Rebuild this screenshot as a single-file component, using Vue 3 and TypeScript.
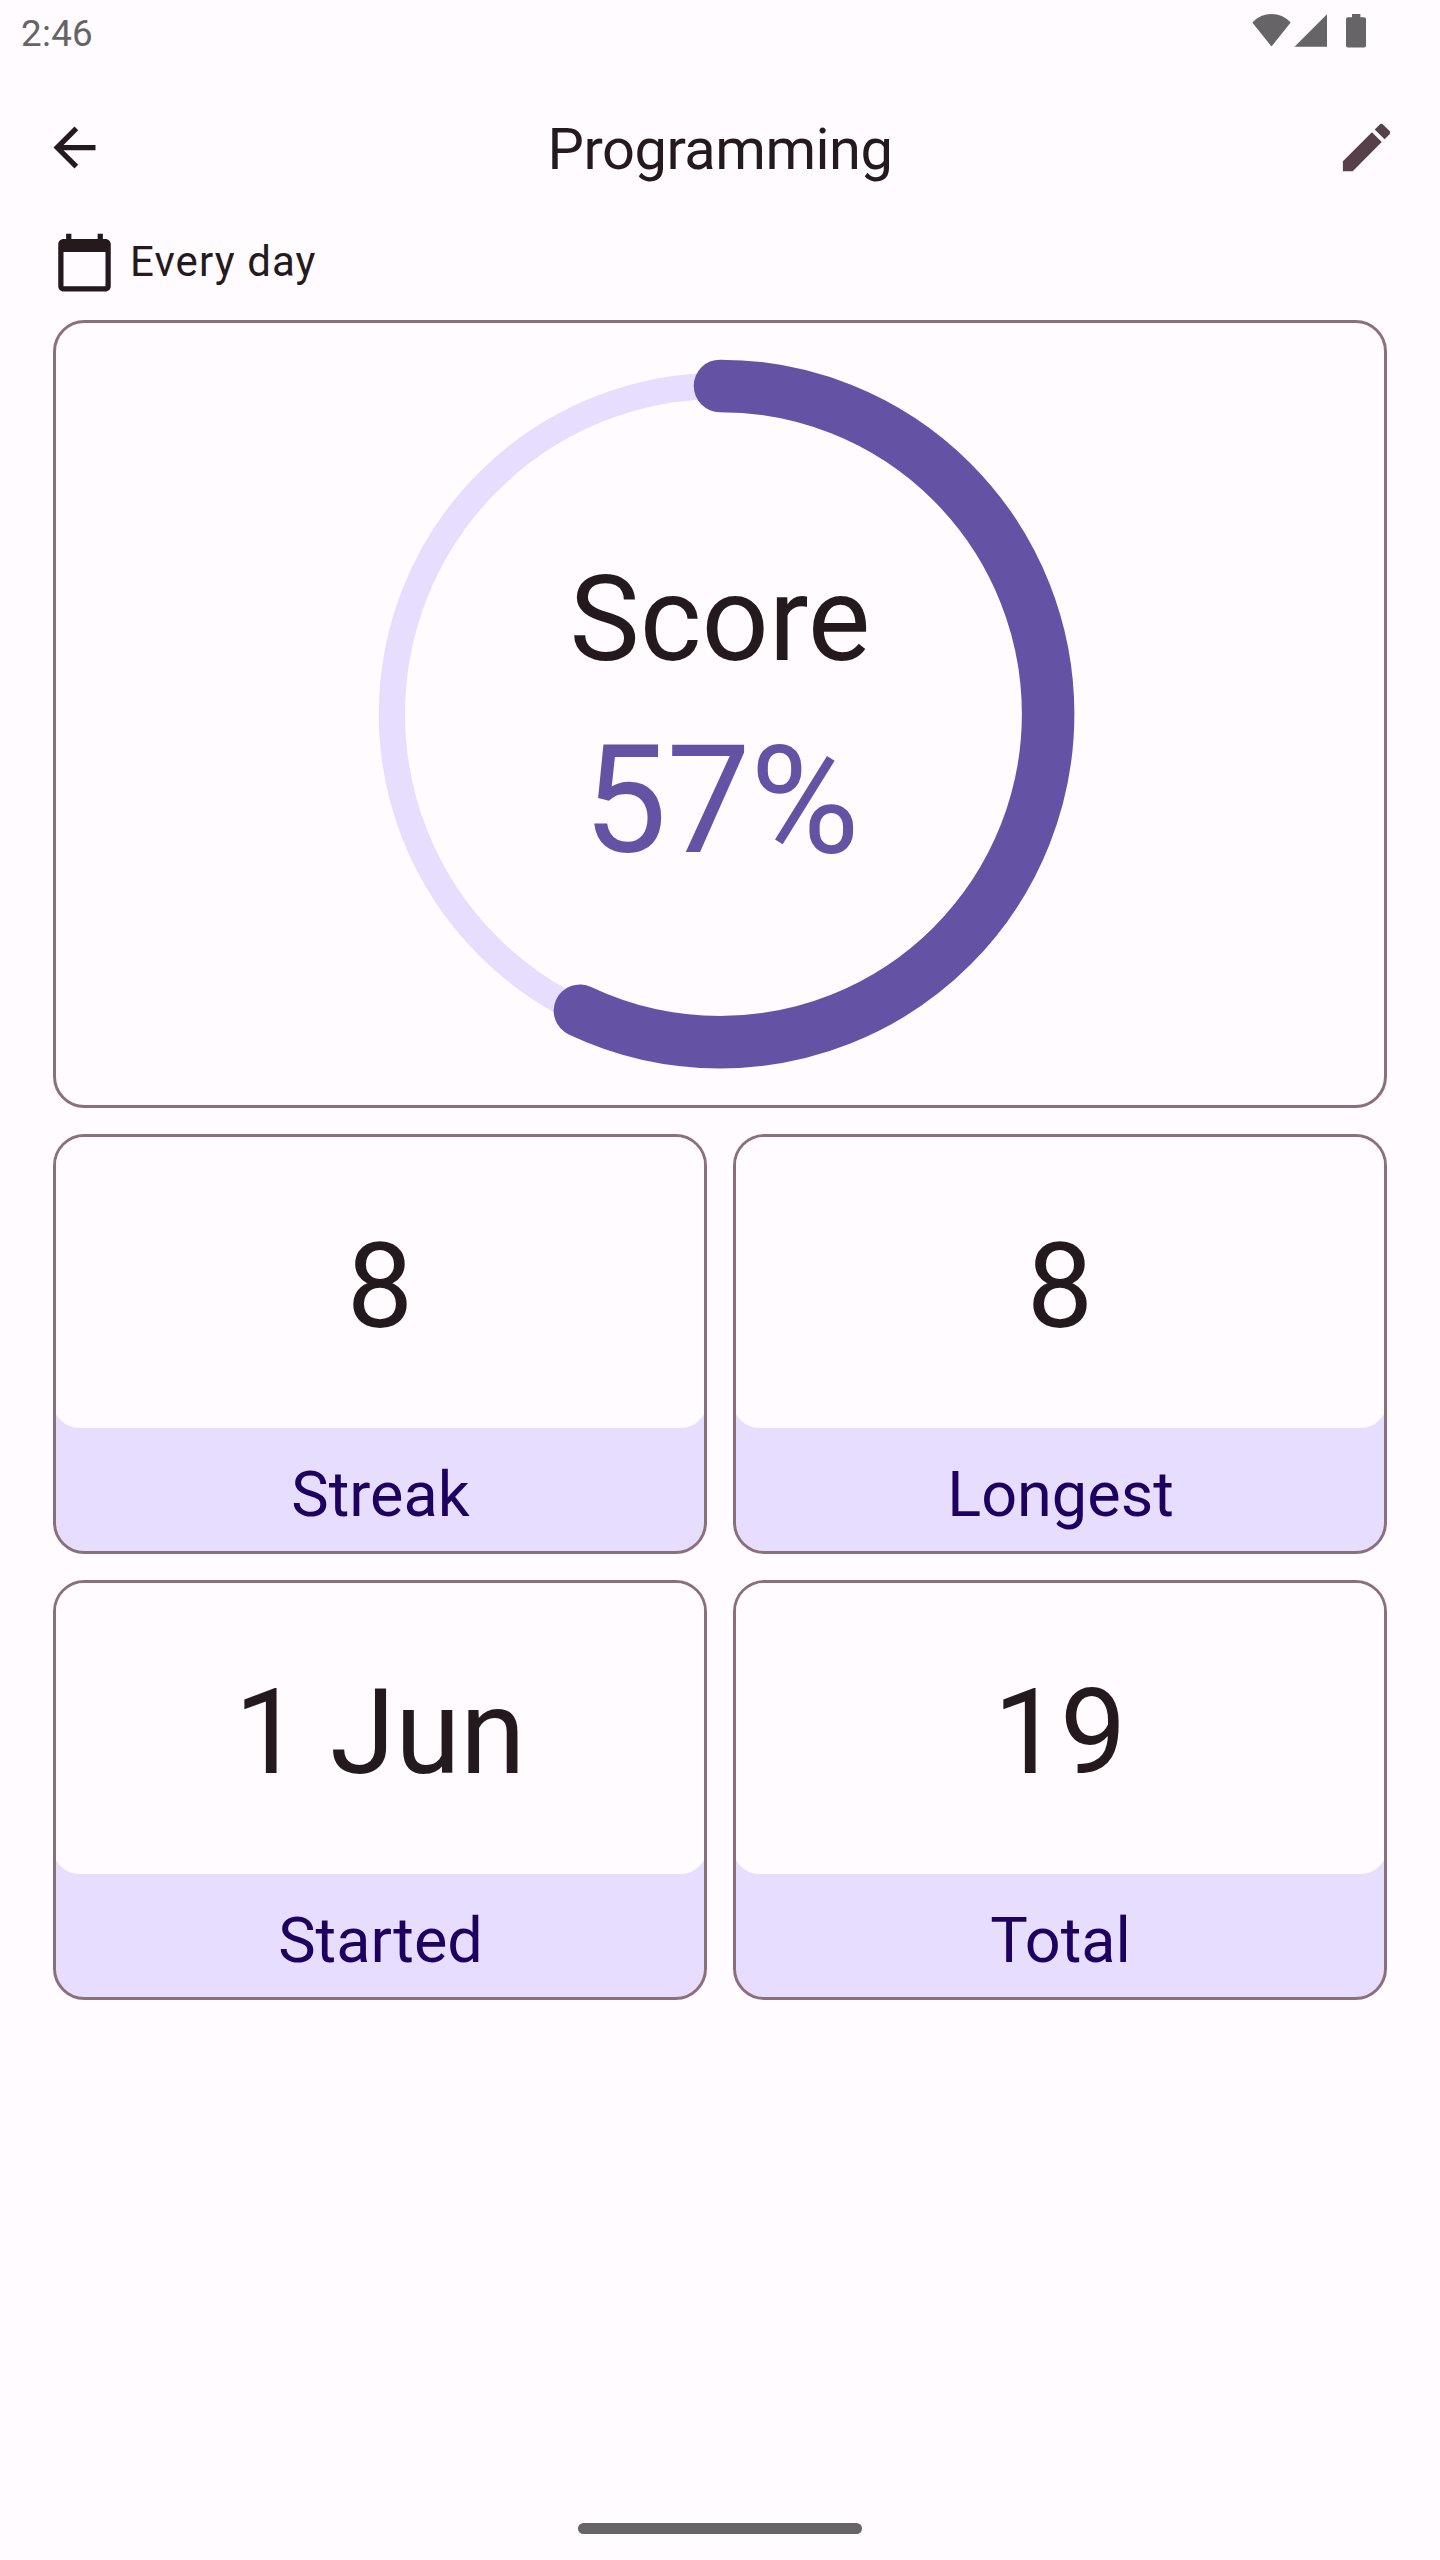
<script setup lang="ts">
interface Stat {
  label: string
  value: string
}

const score = 57
const radius = 328.125
const circumference = 2 * Math.PI * radius
const dash = `${(circumference * score) / 100} ${circumference}`

const stats: Stat[] = [
  { label: 'Streak', value: '8' },
  { label: 'Longest', value: '8' },
  { label: 'Started', value: '1 Jun' },
  { label: 'Total', value: '19' },
]
</script>

<template>
  <div class="screen">
    <header class="status">
      <span class="time">2:46</span>
      <svg class="status-icons" width="116" height="36" viewBox="0 0 116 36">
        <path d="M0.3 9.4Q8.500 1 19.500 1T38.700 9.400L19.500 33.500Z" />
        <path d="M42.500 33.700H75V1.200Z" />
        <path d="M100 1h8.400v3.200h3.600a2 2 0 0 1 2 2v26.300a2 2 0 0 1-2 2H96a2 2 0 0 1-2-2V6.200a2 2 0 0 1 2-2h4z" />
      </svg>
    </header>

    <nav class="app-bar">
      <svg class="icon back" viewBox="0 0 24 24">
        <path d="M20 11H7.830l5.590-5.590L12 4l-8 8 8 8 1.410-1.410L7.830 13H20v-2z" />
      </svg>
      <h1 class="title">Programming</h1>
      <svg class="icon edit" viewBox="0 0 24 24">
        <path d="M3 17.250V21h3.750L17.810 9.940l-3.750-3.750L3 17.250zM20.710 7.040c.39-.39.39-1.020 0-1.410l-2.340-2.340c-.39-.39-1.020-.39-1.410 0l-1.830 1.830 3.750 3.750 1.830-1.830z" />
      </svg>
    </nav>

    <main class="content">
      <div class="schedule">
        <svg class="icon" viewBox="0 0 24 24">
          <path d="M20 3h-1V1h-2v2H7V1H5v2H4c-1.100 0-2 .9-2 2v16c0 1.100.9 2 2 2h16c1.100 0 2-.9 2-2V5c0-1.100-.9-2-2-2zm0 18H4V8h16v13z" />
        </svg>
        <span class="frequency">Every day</span>
      </div>

      <section class="score-card">
        <svg class="ring" width="710" height="710" viewBox="-355 -355 710 710">
          <circle class="track" :r="radius" />
          <circle class="progress" :r="radius" :stroke-dasharray="dash" transform="rotate(-90)" />
        </svg>
        <div class="score">
          <span class="score-label">Score</span>
          <span class="score-value">{{ score }}%</span>
        </div>
      </section>

      <section class="stats">
        <article v-for="stat in stats" :key="stat.label" class="stat">
          <div class="stat-value">{{ stat.value }}</div>
          <div class="stat-label">{{ stat.label }}</div>
        </article>
      </section>
    </main>

    <footer class="gesture"><span class="handle"></span></footer>
  </div>
</template>

<style>
body {
  margin: 0;
  background: #fffbff;
}
</style>

<style scoped>
.screen {
  display: flex;
  flex-direction: column;
  width: 1440px;
  height: 2560px;
  overflow: hidden;
  background: #fffbff;
  color: #24191d;
  font-family: Roboto, "Liberation Sans", sans-serif;
}

.status {
  display: flex;
  justify-content: space-between;
  align-items: flex-start;
  box-sizing: border-box;
  height: 63px;
  padding: 13px 72px 0 21px;
  color: #666467;
}

.time {
  font-size: 36.75px;
  line-height: 42px;
  letter-spacing: 0.3px;
}

.status-icons {
  fill: #666467;
}

.app-bar {
  display: flex;
  justify-content: space-between;
  align-items: center;
  box-sizing: border-box;
  height: 168px;
  padding: 0 42px 0 43px;
}

.icon {
  display: block;
  width: 63px;
  height: 63px;
  fill: currentColor;
}

.edit {
  color: #57404a;
}

.title {
  margin: 0;
  padding: 6px 1px 0 0;
  font-size: 57.75px;
  font-weight: 400;
  line-height: 73.5px;
  letter-spacing: -0.5px;
}

.content {
  flex: 1;
  padding: 0 53px;
}

.schedule {
  display: flex;
  align-items: center;
  gap: 14px;
  height: 63px;
  margin-bottom: 26px;
}

.frequency {
  padding-bottom: 2px;
  font-size: 42px;
  line-height: 61px;
  letter-spacing: 1.1px;
}

.score-card {
  display: grid;
  place-items: center;
  box-sizing: border-box;
  height: 788px;
  border: 3px solid #8b707b;
  border-radius: 31.5px;
}

.ring,
.score {
  grid-area: 1 / 1;
}

.ring circle {
  fill: none;
}

.track {
  stroke: #e7deff;
  stroke-width: 26.25;
}

.progress {
  stroke: #6452a5;
  stroke-width: 52.5;
  stroke-linecap: round;
}

.score {
  display: flex;
  flex-direction: column;
  align-items: center;
  gap: 29px;
  padding-top: 9px;
}

.score-label {
  font-size: 118.125px;
  line-height: 136.5px;
}

.score-value {
  padding-left: 2px;
  color: #6452a5;
  font-size: 149.625px;
  line-height: 168px;
  letter-spacing: -0.5px;
}

.stats {
  display: grid;
  grid-template-columns: 1fr 1fr;
  gap: 26px;
  margin-top: 26px;
}

.stat {
  display: flex;
  flex-direction: column;
  box-sizing: border-box;
  height: 420px;
  border: 3px solid #8b707b;
  border-radius: 31.5px;
  background: #e7deff;
  background-clip: padding-box;
  overflow: hidden;
}

.stat-value {
  display: flex;
  justify-content: center;
  align-items: center;
  box-sizing: border-box;
  height: 291px;
  margin: 0 -3px;
  padding-top: 9px;
  border-radius: 0 0 26.25px 26.25px;
  background: #fffbff;
  font-size: 118.125px;
  line-height: 136.5px;
}

.stat-label {
  display: flex;
  flex: 1;
  justify-content: center;
  align-items: center;
  padding: 10px 0 0 1px;
  color: #1e0060;
  font-size: 63px;
  line-height: 84px;
}

.gesture {
  display: flex;
  justify-content: center;
  height: 37px;
}

.handle {
  width: 284px;
  height: 10.5px;
  border-radius: 6px;
  background: #666467;
}
</style>
